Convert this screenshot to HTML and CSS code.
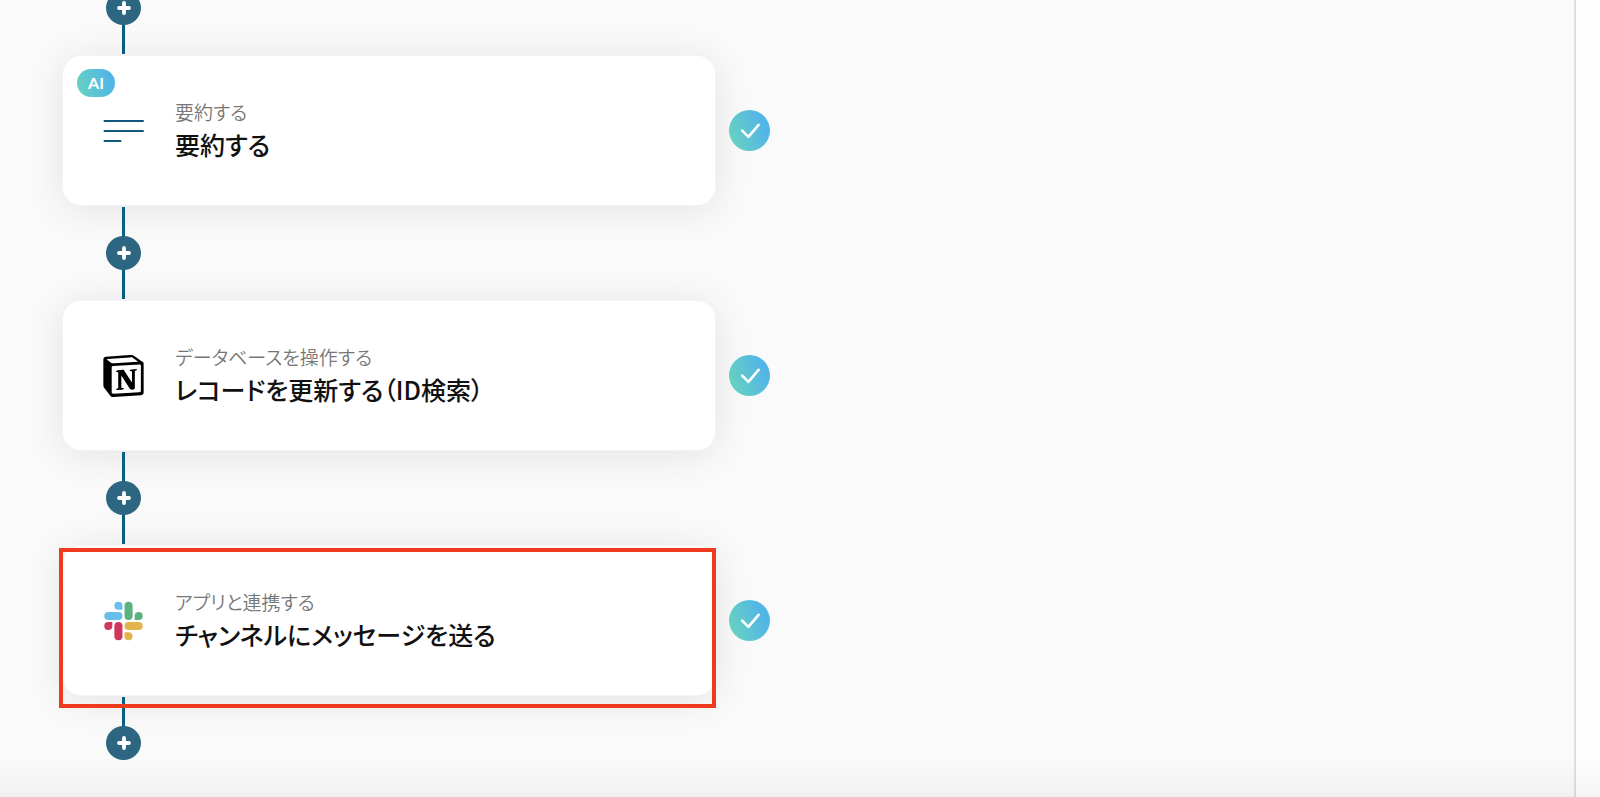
FILE: index.html
```html
<!DOCTYPE html>
<html lang="ja">
<head>
    <meta charset="UTF-8">
    <meta name="viewport" content="width=device-width, initial-scale=1.0">
    <title>フローボット</title>
    <link rel="stylesheet" href="styles.css">
</head>
<body>
    <!-- shared icons -->
    <svg class="defs" aria-hidden="true">
        <defs>
            <linearGradient id="doneGradient" x1="0" y1="0.7" x2="1" y2="0.3">
                <stop offset="0" stop-color="#68d3be"/>
                <stop offset="0.85" stop-color="#52b5e7"/>
            </linearGradient>
            <symbol id="plus" viewBox="0 0 14 14">
                <path d="M7 2v10M2 7h10" stroke="#fff" stroke-width="3.8" stroke-linecap="round"/>
            </symbol>
            <symbol id="done" viewBox="0 0 41 41">
                <circle cx="20.5" cy="20.5" r="20.5" fill="url(#doneGradient)"/>
                <path d="M13.2 20.6l6.2 6.2L29.6 14.8" fill="none" stroke="#fff" stroke-width="2.6" stroke-linecap="round" stroke-linejoin="round"/>
            </symbol>
        </defs>
    </svg>

    <div class="layout">
        <main class="flow">
            <div class="connector">
                <button type="button" class="add-btn" aria-label="追加"><svg><use href="#plus"/></svg></button>
            </div>

            <section class="step">
                <div class="card">
                    <span class="badge">AI</span>
                    <svg class="icon" viewBox="0 0 41 42" fill="none" stroke="#10587a" stroke-width="2" stroke-linecap="round">
                        <path d="M1.5 11h38.5M1.5 21h38.5M1.5 31h16"/>
                    </svg>
                    <div class="text">
                        <p class="label">要約する</p>
                        <h2 class="title">要約する</h2>
                    </div>
                </div>
                <svg class="status"><use href="#done"/></svg>
            </section>

            <div class="connector">
                <button type="button" class="add-btn" aria-label="追加"><svg><use href="#plus"/></svg></button>
            </div>

            <section class="step">
                <div class="card">
                    <svg class="icon" viewBox="1 0 22 24" fill="#000">
                        <path d="M4.459 4.208c.746.606 1.026.56 2.428.466l13.215-.793c.28 0 .047-.28-.046-.326L17.86 1.968c-.42-.326-.981-.7-2.055-.607L3.01 2.295c-.466.046-.56.28-.374.466zm.793 3.08v13.904c0 .747.373 1.027 1.214.98l14.523-.84c.841-.046.935-.56.935-1.167V6.354c0-.606-.233-.933-.748-.887l-15.177.887c-.56.047-.747.327-.747.933zm14.337.745c.093.42 0 .84-.42.888l-.7.14v10.264c-.608.327-1.168.514-1.635.514-.748 0-.935-.234-1.495-.933l-4.577-7.186v6.952L12.21 19s0 .84-1.168.84l-3.222.186c-.093-.186 0-.653.327-.746l.84-.233V9.854L7.822 9.76c-.094-.42.14-1.026.793-1.073l3.456-.233 4.764 7.279v-6.44l-1.215-.139c-.093-.514.28-.887.747-.933zM1.936 1.035l13.31-.98c1.634-.14 2.055-.047 3.082.7l4.249 2.986c.7.513.934.653.934 1.213v16.378c0 1.026-.373 1.634-1.68 1.726l-15.458.934c-.98.047-1.448-.093-1.962-.747l-3.129-4.06c-.56-.747-.793-1.306-.793-1.96V2.667c0-.839.374-1.54 1.447-1.632z"/>
                    </svg>
                    <div class="text">
                        <p class="label">データベースを操作する</p>
                        <h2 class="title">レコードを更新する（ID検索）</h2>
                    </div>
                </div>
                <svg class="status"><use href="#done"/></svg>
            </section>

            <div class="connector">
                <button type="button" class="add-btn" aria-label="追加"><svg><use href="#plus"/></svg></button>
            </div>

            <section class="step">
                <div class="card highlighted">
                    <svg class="icon" viewBox="-0.8 -0.8 25.6 25.6">
                        <path fill="#cf375c" d="M5.042 15.165a2.528 2.528 0 0 1-2.52 2.523A2.528 2.528 0 0 1 0 15.165a2.527 2.527 0 0 1 2.522-2.52h2.52v2.52zM6.313 15.165a2.527 2.527 0 0 1 2.521-2.52 2.527 2.527 0 0 1 2.521 2.52v6.313A2.528 2.528 0 0 1 8.834 24a2.528 2.528 0 0 1-2.521-2.522v-6.313z"/>
                        <path fill="#65c0ea" d="M8.834 5.042a2.528 2.528 0 0 1-2.521-2.52A2.528 2.528 0 0 1 8.834 0a2.528 2.528 0 0 1 2.521 2.522v2.52H8.834zM8.834 6.313a2.528 2.528 0 0 1 2.521 2.521 2.528 2.528 0 0 1-2.521 2.521H2.522A2.528 2.528 0 0 1 0 8.834a2.528 2.528 0 0 1 2.522-2.521h6.312z"/>
                        <path fill="#5bb281" d="M18.956 8.834a2.528 2.528 0 0 1 2.522-2.521A2.528 2.528 0 0 1 24 8.834a2.528 2.528 0 0 1-2.522 2.521h-2.522V8.834zM17.688 8.834a2.528 2.528 0 0 1-2.523 2.521 2.527 2.527 0 0 1-2.52-2.521V2.522A2.527 2.527 0 0 1 15.165 0a2.528 2.528 0 0 1 2.523 2.522v6.312z"/>
                        <path fill="#e3b34c" d="M15.165 18.956a2.528 2.528 0 0 1 2.523 2.522A2.528 2.528 0 0 1 15.165 24a2.527 2.527 0 0 1-2.52-2.522v-2.522h2.52zM15.165 17.688a2.527 2.527 0 0 1-2.52-2.523 2.526 2.526 0 0 1 2.52-2.52h6.313A2.527 2.527 0 0 1 24 15.165a2.528 2.528 0 0 1-2.522 2.523h-6.313z"/>
                    </svg>
                    <div class="text">
                        <p class="label">アプリと連携する</p>
                        <h2 class="title">チャンネルにメッセージを送る</h2>
                    </div>
                </div>
                <svg class="status"><use href="#done"/></svg>
            </section>

            <div class="connector last">
                <button type="button" class="add-btn" aria-label="追加"><svg><use href="#plus"/></svg></button>
            </div>
        </main>
        <aside class="side"></aside>
    </div>
</body>
</html>
```

FILE: styles.css
```css
* {
    box-sizing: border-box;
}

body {
    margin: 0;
    font-family: "Noto Sans CJK JP", "Noto Sans", sans-serif;
    font-feature-settings: "palt";
    background: #fafafa;
    color: #111;
}

.defs {
    position: absolute;
    width: 0;
    height: 0;
}

.layout {
    position: relative;
    display: flex;
    height: 100vh;
    overflow: hidden;
}

/* fade along the bottom edge */
.layout::after {
    content: "";
    position: absolute;
    left: 0;
    right: 0;
    bottom: 0;
    height: 40px;
    background: linear-gradient(to bottom, rgba(0, 0, 0, 0), rgba(0, 0, 0, 0.04));
    pointer-events: none;
}

.flow {
    flex: 1;
    margin-top: -40px;
    padding-left: 63px;
}

.side {
    width: 26px;
    background: #fefefe;
    border-left: 2px solid #dfdfdf;
}

.step {
    display: flex;
    align-items: center;
    gap: 14px;
}

.card {
    position: relative;
    display: flex;
    align-items: center;
    gap: 31px;
    width: 100%;
    max-width: 652px;
    height: 149px;
    padding: 0 40px;
    background: #fff;
    border-radius: 18px;
    box-shadow: 0 0 0 1px #f4f4f4, 0 4px 40px rgba(0, 0, 0, 0.1);
}

.highlighted::after {
    content: "";
    position: absolute;
    top: 2px;
    right: -1px;
    bottom: -13px;
    left: -4px;
    z-index: 1;
    border: 4px solid #ee3a1e;
}

.badge {
    position: absolute;
    top: 13px;
    left: 14px;
    width: 38px;
    border-radius: 14px;
    background: linear-gradient(75deg, #68d3be, #52b5e7 85%);
    color: #fff;
    font-family: Lato, sans-serif;
    font-size: 16px;
    font-weight: bold;
    line-height: 28px;
    text-align: center;
}

.icon {
    flex: none;
    width: 41px;
    height: 42px;
}

.text {
    padding-bottom: 6px;
}

.label,
.title {
    margin: 0;
    white-space: nowrap;
}

.label {
    color: #777;
    font-size: 19px;
    font-weight: 350;
    line-height: 32px;
}

.title {
    font-size: 25px;
    font-weight: 500;
    line-height: 32px;
}

.status {
    flex: none;
    z-index: 1;
    width: 41px;
    height: 41px;
}

/* line between two cards with the add button in its middle */
.connector {
    position: relative;
    display: flex;
    align-items: center;
    justify-content: center;
    width: 35px;
    height: 92px;
    margin: 2px 0 2px 43px;
    background: linear-gradient(#0a6080, #0a6080) center / 3px 100% no-repeat;
}

.connector.last {
    height: 63px;
    align-items: flex-end;
}

.add-btn {
    display: flex;
    align-items: center;
    justify-content: center;
    width: 35px;
    height: 34px;
    padding: 0;
    border: none;
    border-radius: 50%;
    background: #2d6680;
    cursor: pointer;
}

.add-btn svg {
    width: 14px;
    height: 14px;
}
```
